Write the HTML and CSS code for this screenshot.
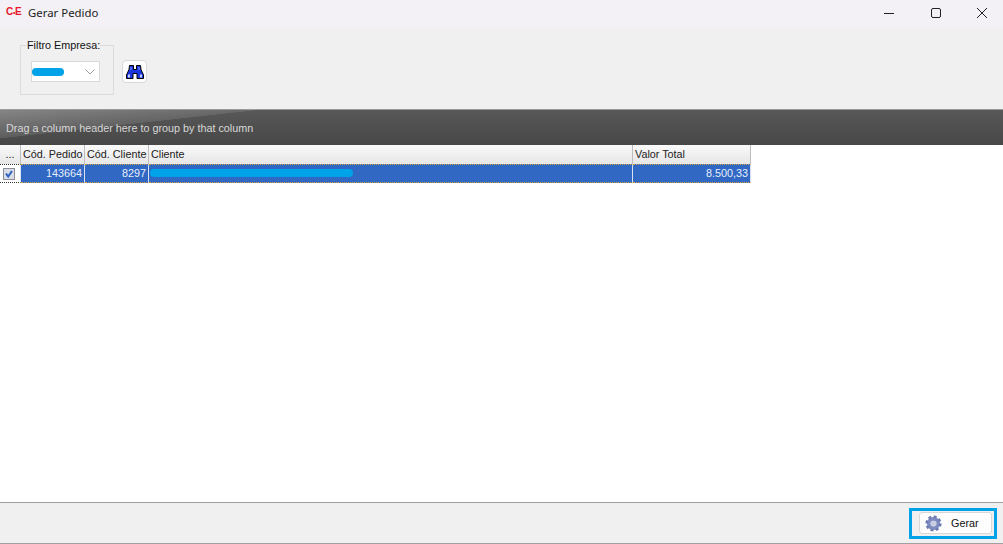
FILE: index.html
```html
<!DOCTYPE html>
<html lang="pt-BR">
<head>
    <meta charset="UTF-8">
    <title>Gerar Pedido</title>
    <link rel="stylesheet" href="styles.css">
</head>
<body>
    <div class="window">
        <div class="titlebar">
            <div class="app-logo">C<span class="logo-dot">•</span>E</div>
            <div class="title">Gerar Pedido</div>
            <div class="win-buttons">
                <svg class="win-icon" width="12" height="12" viewBox="0 0 12 12"><path d="M0 6.5H10" stroke="#222" fill="none"/></svg>
                <svg class="win-icon" width="12" height="12" viewBox="0 0 12 12"><rect x="1.5" y="1.5" width="9" height="9" rx="1.5" stroke="#222" fill="none"/></svg>
                <svg class="win-icon" width="12" height="12" viewBox="0 0 12 12"><path d="M1 1L11 11M11 1L1 11" stroke="#222" fill="none"/></svg>
            </div>
        </div>

        <div class="toolbar">
            <fieldset class="filter">
                <legend>Filtro Empresa:</legend>
                <div class="combo">
                    <span class="redact redact-combo"></span>
                    <svg class="combo-arrow" width="10" height="6" viewBox="0 0 10 6"><path d="M0.5 0.5L5 5L9.5 0.5" stroke="#a0a0a0" fill="none"/></svg>
                </div>
            </fieldset>
            <button class="search-btn">
                <!-- binoculos -->
                <svg width="18" height="16" viewBox="0 0 18 16">
                    <path d="M3.5 1.5H7.5V5.5H10.5V1.5H14.5L15 5.5L17.5 11V14.5H11V9.5H7V14.5H0.5V11L3 5.5Z" fill="#1a35e0" stroke="#000" stroke-width="1" stroke-linejoin="round"/>
                    <path d="M5 3V6M13 3V6" stroke="#8fa0ff" stroke-width="1"/>
                    <path d="M3 13.5V10.5M15 13.5V10.5" stroke="#fff" stroke-width="1.5"/>
                </svg>
            </button>
        </div>

        <div class="group-bar">Drag a column header here to group by that column</div>

        <div class="grid">
            <div class="grid-row grid-head">
                <div class="cell col-check">...</div>
                <div class="cell col-pedido">Cód. Pedido</div>
                <div class="cell col-cod">Cód. Cliente</div>
                <div class="cell col-cliente">Cliente</div>
                <div class="cell col-valor">Valor Total</div>
            </div>
            <div class="grid-row grid-selected">
                <div class="cell col-check check-cell">
                    <svg width="12" height="12" viewBox="0 0 12 12">
                        <rect x="0.5" y="0.5" width="11" height="11" fill="#d9dde8" stroke="#8c8f96"/>
                        <path d="M3 5.5L5.2 8.5L9 3" stroke="#2f62c0" stroke-width="2" fill="none"/>
                    </svg>
                </div>
                <div class="cell col-pedido num">143664</div>
                <div class="cell col-cod num">8297</div>
                <div class="cell col-cliente"><span class="redact redact-cliente"></span></div>
                <div class="cell col-valor num">8.500,33</div>
            </div>
        </div>

        <div class="footer">
            <div class="highlight">
                <button class="gerar-btn">
                    <svg width="17" height="17" viewBox="0 0 18 18">
                        <circle cx="9" cy="9" r="5" fill="none" stroke="#7f8cc0" stroke-width="4"/>
                        <circle cx="9" cy="9" r="7.3" fill="none" stroke="#6d7ab0" stroke-width="2.6" stroke-dasharray="3.1 2.63"/>
                        <circle cx="9" cy="9" r="3" fill="#c9cee2"/>
                    </svg>
                    <span>Gerar</span>
                </button>
            </div>
        </div>
    </div>
</body>
</html>
```

FILE: styles.css
```css
html, body {
    margin: 0;
    padding: 0;
    height: 100%;
    overflow: hidden;
}
body {
    font-family: "Liberation Sans", Arial, sans-serif;
    font-size: 10.8px;
    color: #111;
    background: #fff;
}
.window {
    display: flex;
    flex-direction: column;
    height: 544px;
}

/* barra de titulo */
.titlebar {
    display: flex;
    align-items: center;
    box-sizing: border-box;
    height: 28px;
    padding-bottom: 3px;
    flex-shrink: 0;
    background: #f3f1f5;
}
.app-logo {
    width: 16px;
    margin-left: 6px;
    font-size: 10px;
    font-weight: bold;
    line-height: 10px;
    letter-spacing: -0.3px;
    color: #e8182c;
    white-space: nowrap;
}
.logo-dot {
    font-size: 7px;
}
.title {
    margin-left: 6px;
    font-family: "Noto Sans", sans-serif;
    font-size: 11.4px;
    color: #222;
}
.win-buttons {
    display: flex;
    margin-left: auto;
    margin-right: 15px;
    gap: 34px;
}
.win-icon {
    display: block;
}

.toolbar {
    display: flex;
    align-items: flex-start;
    height: 81px;
    flex-shrink: 0;
    box-sizing: border-box;
    padding: 10px 0 0 20px;
    background: #f0f0f0;
}
.filter {
    box-sizing: border-box;
    width: 94px;
    height: 57px;
    margin: 0;
    padding: 0;
    border: 1px solid #dcdcdc;
}
.filter legend {
    padding: 0;
    margin-left: 6px;
    font-size: 10.8px;
    line-height: 14px;
    white-space: nowrap;
    color: #111;
}
.combo {
    display: flex;
    align-items: center;
    justify-content: space-between;
    box-sizing: border-box;
    width: 69px;
    height: 21px;
    margin: 9px 0 0 10px;
    background: #fff;
    border: 1px solid #d9d9d9;
}
.combo-arrow {
    margin-right: 4px;
}
.redact {
    display: block;
    background: #00a2e8;
    border-radius: 4px;
}
.redact-combo {
    width: 32px;
    height: 8px;
}
.search-btn {
    display: flex;
    align-items: center;
    justify-content: center;
    width: 25px;
    height: 23px;
    margin: 22px 0 0 8px;
    padding: 0;
    background: #fdfdfd;
    border: 1px solid #d8d8d8;
    border-radius: 4px;
}

.group-bar {
    box-sizing: border-box;
    height: 36px;
    flex-shrink: 0;
    padding: 11px 0 0 6px;
    line-height: 14px;
    color: #d8d8d8;
    border-top: 1px solid #9a9a9a;
    background:
        linear-gradient(173.7deg, rgba(255,255,255,0.27) 0, rgba(255,255,255,0.1) 28px, transparent 28.5px),
        linear-gradient(#585858, #474747);
}

.grid {
    flex: 1;
    background: #fff;
}
.grid-row {
    display: flex;
    width: 751px;
}
.cell {
    box-sizing: border-box;
    flex-shrink: 0;
    padding: 0 2px;
    white-space: nowrap;
    border-right: 1px solid #bdbdbd;
}
.grid-head {
    height: 19px;
    line-height: 18px;
    color: #222;
    background: linear-gradient(#fafafa, #e6e6e6);
}
.col-check {
    width: 21px;
    text-align: center;
}
.col-pedido,
.col-cod {
    width: 64px;
}
.col-cliente {
    width: 484px;
}
.col-valor {
    width: 118px;
}
.grid-selected {
    height: 19px;
    line-height: 18px;
    color: #e8eefa;
}
.grid-selected .cell {
    background: #3068c4;
    border-right: 1px solid #d9e2f2;
    border-top: 1px dotted #d6a040;
    border-bottom: 1px dotted #d6a040;
}
.grid-selected .num {
    text-align: right;
    line-height: 17px;
}
.grid-selected .check-cell {
    display: flex;
    align-items: center;
    justify-content: center;
    padding: 0 2px 0 0;
    background: #fff;
    border-top: 1px dotted #333;
    border-bottom: 1px dotted #333;
}
.redact-cliente {
    width: 203px;
    height: 8px;
    margin: 4px 0 0 -1px;
}

.footer {
    display: flex;
    justify-content: flex-end;
    align-items: center;
    box-sizing: border-box;
    height: 42px;
    flex-shrink: 0;
    padding-right: 6px;
    background: #f0f0f0;
    border-top: 1px solid #a0a0a0;
    border-bottom: 1px solid #a0a0a0;
}
.highlight {
    box-sizing: border-box;
    display: flex;
    align-items: center;
    justify-content: flex-end;
    width: 88px;
    height: 31px;
    padding-right: 2px;
    border: 3px solid #00a2e8;
}
.gerar-btn {
    display: flex;
    align-items: center;
    box-sizing: border-box;
    width: 73px;
    height: 22px;
    padding: 0 0 0 5px;
    font-family: inherit;
    font-size: 10.8px;
    color: #111;
    background: #fdfdfd;
    border: 1px solid #d8d8d8;
    border-radius: 3px;
}
.gerar-btn span {
    margin-left: 9px;
}
```
